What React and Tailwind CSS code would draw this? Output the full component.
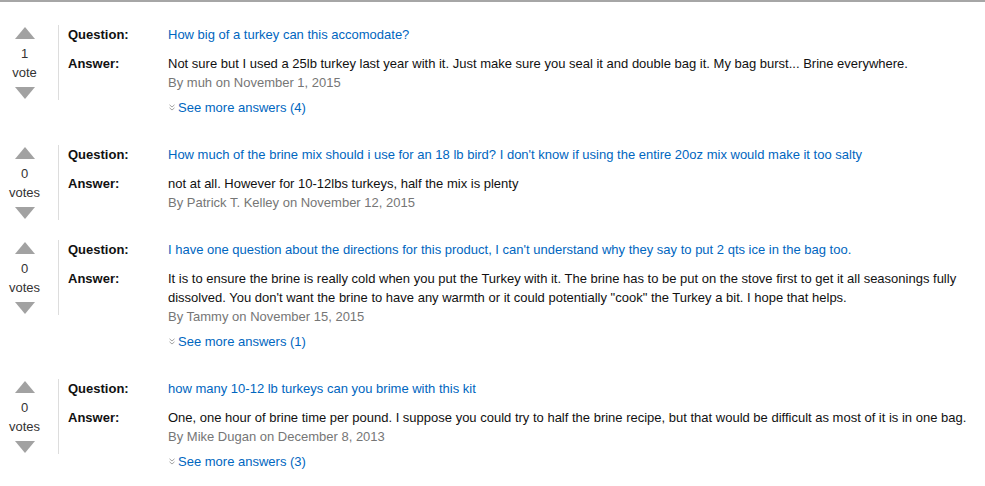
import React from 'react';

const questions = [
    {
        votes: 1,
        question: 'How big of a turkey can this accomodate?',
        answer: 'Not sure but I used a 25lb turkey last year with it. Just make sure you seal it and double bag it. My bag burst... Brine everywhere.',
        author: 'muh',
        date: 'November 1, 2015',
        more: 4,
    },
    {
        votes: 0,
        question: "How much of the brine mix should i use for an 18 lb bird? I don't know if using the entire 20oz mix would make it too salty",
        answer: 'not at all. However for 10-12lbs turkeys, half the mix is plenty',
        author: 'Patrick T. Kelley',
        date: 'November 12, 2015',
    },
    {
        votes: 0,
        question: "I have one question about the directions for this product, I can't understand why they say to put 2 qts ice in the bag too.",
        answer: 'It is to ensure the brine is really cold when you put the Turkey with it. The brine has to be put on the stove first to get it all seasonings fully dissolved. You don\'t want the brine to have any warmth or it could potentially "cook" the Turkey a bit. I hope that helps.',
        author: 'Tammy',
        date: 'November 15, 2015',
        more: 1,
    },
    {
        votes: 0,
        question: 'how many 10-12 lb turkeys can you brime with this kit',
        answer: 'One, one hour of brine time per pound. I suppose you could try to half the brine recipe, but that would be difficult as most of it is in one bag.',
        author: 'Mike Dugan',
        date: 'December 8, 2013',
        more: 3,
    },
];

const Arrow = ({ down }) => (
    <svg width="20" height="12" viewBox="0 0 20 12" className="block">
        {down ? <polygon points="0,0 20,0 10,12" fill="#a2a2a2" /> : <polygon points="10,0 20,12 0,12" fill="#a2a2a2" />}
    </svg>
);

const DoubleChevron = () => (
    <svg width="6" height="7" viewBox="0 0 6 7" className="ml-[1px] mr-[3px] shrink-0">
        <path d="M0.5 0.8 L3 3 L5.5 0.8 M0.5 3.8 L3 6 L5.5 3.8" fill="none" stroke="#999" strokeWidth="0.9" />
    </svg>
);

const QuestionRow = ({ item }) => (
    <div className="flex items-start mb-[28px]">
        {/* Votes */}
        <div className="w-[59px] shrink-0 h-[75px] -mb-[10px] border-r border-[#dddddd] flex flex-col items-center pr-[9px] pt-[2px]">
            <Arrow />
            <div className="mt-[5px] text-center leading-[19px] text-[#333]">
                <div>{item.votes}</div>
                <div>{item.votes === 1 ? 'vote' : 'votes'}</div>
            </div>
            <div className="mt-[5px]">
                <Arrow down />
            </div>
        </div>

        {/* Q & A */}
        <div className="flex-1 pl-[9px] pr-[10px] leading-[19px]">
            <div className="flex">
                <div className="w-[100px] shrink-0 font-bold text-[#111]">Question:</div>
                <a className="text-[#0066c0]" href="#">{item.question}</a>
            </div>
            <div className="flex mt-[10px]">
                <div className="w-[100px] shrink-0 font-bold text-[#111]">Answer:</div>
                <div className="flex-1">
                    <p className="text-[#111]">{item.answer}</p>
                    <p className="text-[#767676]">By {item.author} on {item.date}</p>
                    {item.more && (
                        <div className="flex items-center mt-[6px]">
                            <DoubleChevron />
                            <a className="text-[#0066c0]" href="#">See more answers ({item.more})</a>
                        </div>
                    )}
                </div>
            </div>
        </div>
    </div>
);

const App = () => {
    return (
        <div className="min-h-screen bg-white text-[13px] font-['Liberation_Sans',Arial,sans-serif]">
            <div className="border-t-2 border-[#a6a6a6] pt-[23px]">
                {questions.map((q, i) => (
                    <QuestionRow key={i} item={q} />
                ))}
            </div>
        </div>
    );
};

export default App;
